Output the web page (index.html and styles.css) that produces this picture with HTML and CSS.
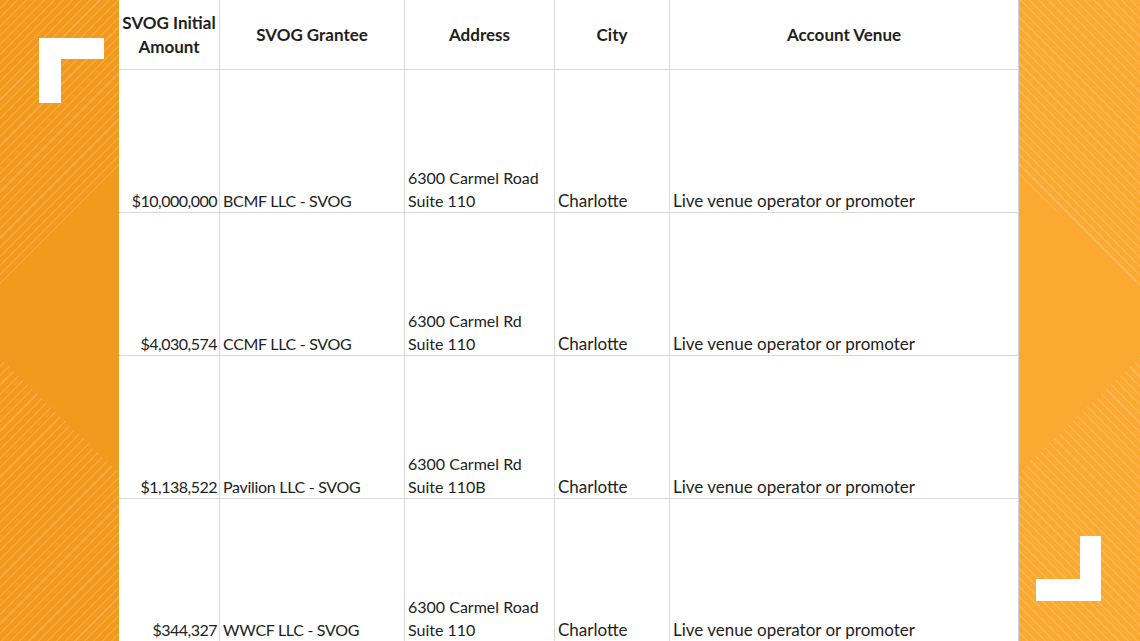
FILE: index.html
```html
<!DOCTYPE html>
<html lang="en">
<head>
<meta charset="utf-8">
<title>SVOG Grantees</title>
<link rel="stylesheet" href="styles.css">
</head>
<body>
<div class="frame">
  <aside class="side side-left"><span class="bracket bracket-tl"></span></aside>
  <main class="sheet">
    <table class="grid">
      <colgroup>
        <col class="c1"><col class="c2"><col class="c3"><col class="c4"><col class="c5">
      </colgroup>
      <thead>
        <tr class="head">
          <th>SVOG Initial<br>Amount</th>
          <th>SVOG Grantee</th>
          <th>Address</th>
          <th>City</th>
          <th>Account Venue</th>
        </tr>
      </thead>
      <tbody>
        <tr class="row">
          <td class="amt">$10,000,000</td>
          <td class="name">BCMF LLC - SVOG</td>
          <td class="addr">6300 Carmel Road<br>Suite 110</td>
          <td>Charlotte</td>
          <td>Live venue operator or promoter</td>
        </tr>
        <tr class="row">
          <td class="amt">$4,030,574</td>
          <td class="name">CCMF LLC - SVOG</td>
          <td class="addr">6300 Carmel Rd<br>Suite 110</td>
          <td>Charlotte</td>
          <td>Live venue operator or promoter</td>
        </tr>
        <tr class="row">
          <td class="amt">$1,138,522</td>
          <td class="name">Pavilion LLC - SVOG</td>
          <td class="addr">6300 Carmel Rd<br>Suite 110B</td>
          <td>Charlotte</td>
          <td>Live venue operator or promoter</td>
        </tr>
        <tr class="row">
          <td class="amt">$344,327</td>
          <td class="name">WWCF LLC - SVOG</td>
          <td class="addr">6300 Carmel Road<br>Suite 110</td>
          <td>Charlotte</td>
          <td>Live venue operator or promoter</td>
        </tr>
      </tbody>
    </table>
  </main>
  <aside class="side side-right"><span class="bracket bracket-br"></span></aside>
</div>
</body>
</html>
```
FILE: styles.css
```css
html, body {
  margin: 0;
  padding: 0;
}
body {
  width: 1140px;
  height: 641px;
  overflow: hidden;
  background: #ffffff;
  font-family: "Lato", "Liberation Sans", sans-serif;
}
.frame {
  display: flex;
  height: 641px;
}
.side {
  position: relative;
  overflow: hidden;
  flex: none;
}
.side-left {
  width: 119px;
  background-color: #f29a1e;
  background-image: repeating-linear-gradient(135deg, rgba(255,255,255,0) 0 5px, rgba(255,225,170,0.22) 5px 6.5px);
}
.side-right {
  width: 121px;
  background-color: #fca932;
  background-image: repeating-linear-gradient(45deg, rgba(255,255,255,0) 0 5px, rgba(255,230,185,0.22) 5px 6.5px);
}
.side::after {
  content: "";
  position: absolute;
  inset: 0;
}
.side-left::after {
  background: #f29a1e;
  clip-path: polygon(100% 165px, 0 284px, 0 358px, 100% 473px);
}
.side-right::after {
  background: #fca932;
  clip-path: polygon(0 177px, 100% 287px, 100% 357px, 0 472px);
}
.bracket {
  position: absolute;
  z-index: 1;
  box-sizing: border-box;
  width: 65px;
  height: 65px;
}
.bracket-tl {
  left: 39px;
  top: 38px;
  border-left: 22px solid #ffffff;
  border-top: 21px solid #ffffff;
}
.bracket-br {
  left: 17px;
  top: 536px;
  border-right: 21px solid #ffffff;
  border-bottom: 22px solid #ffffff;
}
.sheet {
  flex: none;
  width: 900px;
  background: #ffffff;
  overflow: hidden;
}
.grid {
  width: 900px;
  table-layout: fixed;
  border-collapse: separate;
  border-spacing: 0;
  color: #222222;
  font-size: 17px;
}
.c1 { width: 101px; }
.c2 { width: 185px; }
.c3 { width: 150px; }
.c4 { width: 115px; }
.c5 { width: 349px; }
.grid th,
.grid td {
  border-right: 1px solid #dadada;
  border-bottom: 1px solid #dadada;
  padding: 0 3px;
  white-space: nowrap;
  overflow: hidden;
}
.grid th:last-child,
.grid td:last-child {
  border-right-color: #cfd6e2;
}
.head th {
  height: 70px;
  box-sizing: border-box;
  padding-top: 1px;
  font-weight: 700;
  line-height: 24px;
  text-align: center;
  vertical-align: middle;
  color: #1e1e1e;
}
.row td {
  height: 143px;
  box-sizing: border-box;
  line-height: 23px;
  text-align: left;
  vertical-align: bottom;
  padding-bottom: 0;
}
.row td.amt {
  text-align: right;
  padding-right: 2px;
  font-size: 16px;
  letter-spacing: -0.5px;
}
.row td.name {
  font-size: 16px;
  letter-spacing: -0.3px;
}
.row td.addr {
  font-size: 16px;
}
```
